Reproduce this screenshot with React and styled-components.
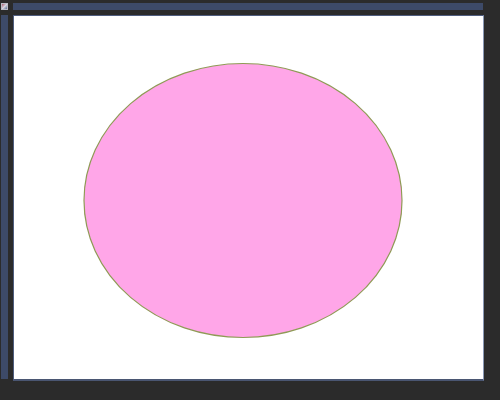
import React from "react";
import styled, { createGlobalStyle } from "styled-components";

const GlobalStyle = createGlobalStyle`
  html, body {
    margin: 0;
    padding: 0;
    background: #2b2b2b;
  }
`;

const Workspace = styled.div`
  width: 500px;
  height: 400px;
  box-sizing: border-box;
  padding: 3px 16px 19px 1px;
  background: #2b2b2b;
  display: grid;
  grid-template-columns: 7px 1fr;
  grid-template-rows: 7px 1fr;
  column-gap: 5px;
  row-gap: 5px;
`;

const CornerButton = styled.div`
  box-sizing: border-box;
  border: 1px solid #b9bac4;
  background: linear-gradient(135deg, #a9586c 0%, #d6d6e0 50%, #55678f 100%);
`;

const TopRuler = styled.div`
  background: #3d4a68;
  margin-right: 1px;
`;

const LeftRuler = styled.div`
  background: #3d4a68;
  margin-bottom: 2px;
`;

const Canvas = styled.div`
  background: #ffffff;
  border-top: 1px solid #4f5d7e;
  border-left: 1px solid #4f5d7e;
  border-right: 1px solid #8a98b5;
  border-bottom: 2px solid #4a5672;
  box-sizing: border-box;
  overflow: hidden;
`;

const Drawing = styled.svg`
  display: block;
  width: 100%;
  height: 100%;
`;

export default function App() {
  return (
    <>
      <GlobalStyle />
      <Workspace>
        <CornerButton />
        <TopRuler />
        <LeftRuler />
        <Canvas>
          <Drawing viewBox="0 0 469 363">
            <ellipse cx="229" cy="184.5" rx="159" ry="137" fill="#ffa6e8" stroke="#8f9a55" strokeWidth="1.2" />
          </Drawing>
        </Canvas>
      </Workspace>
    </>
  );
}
